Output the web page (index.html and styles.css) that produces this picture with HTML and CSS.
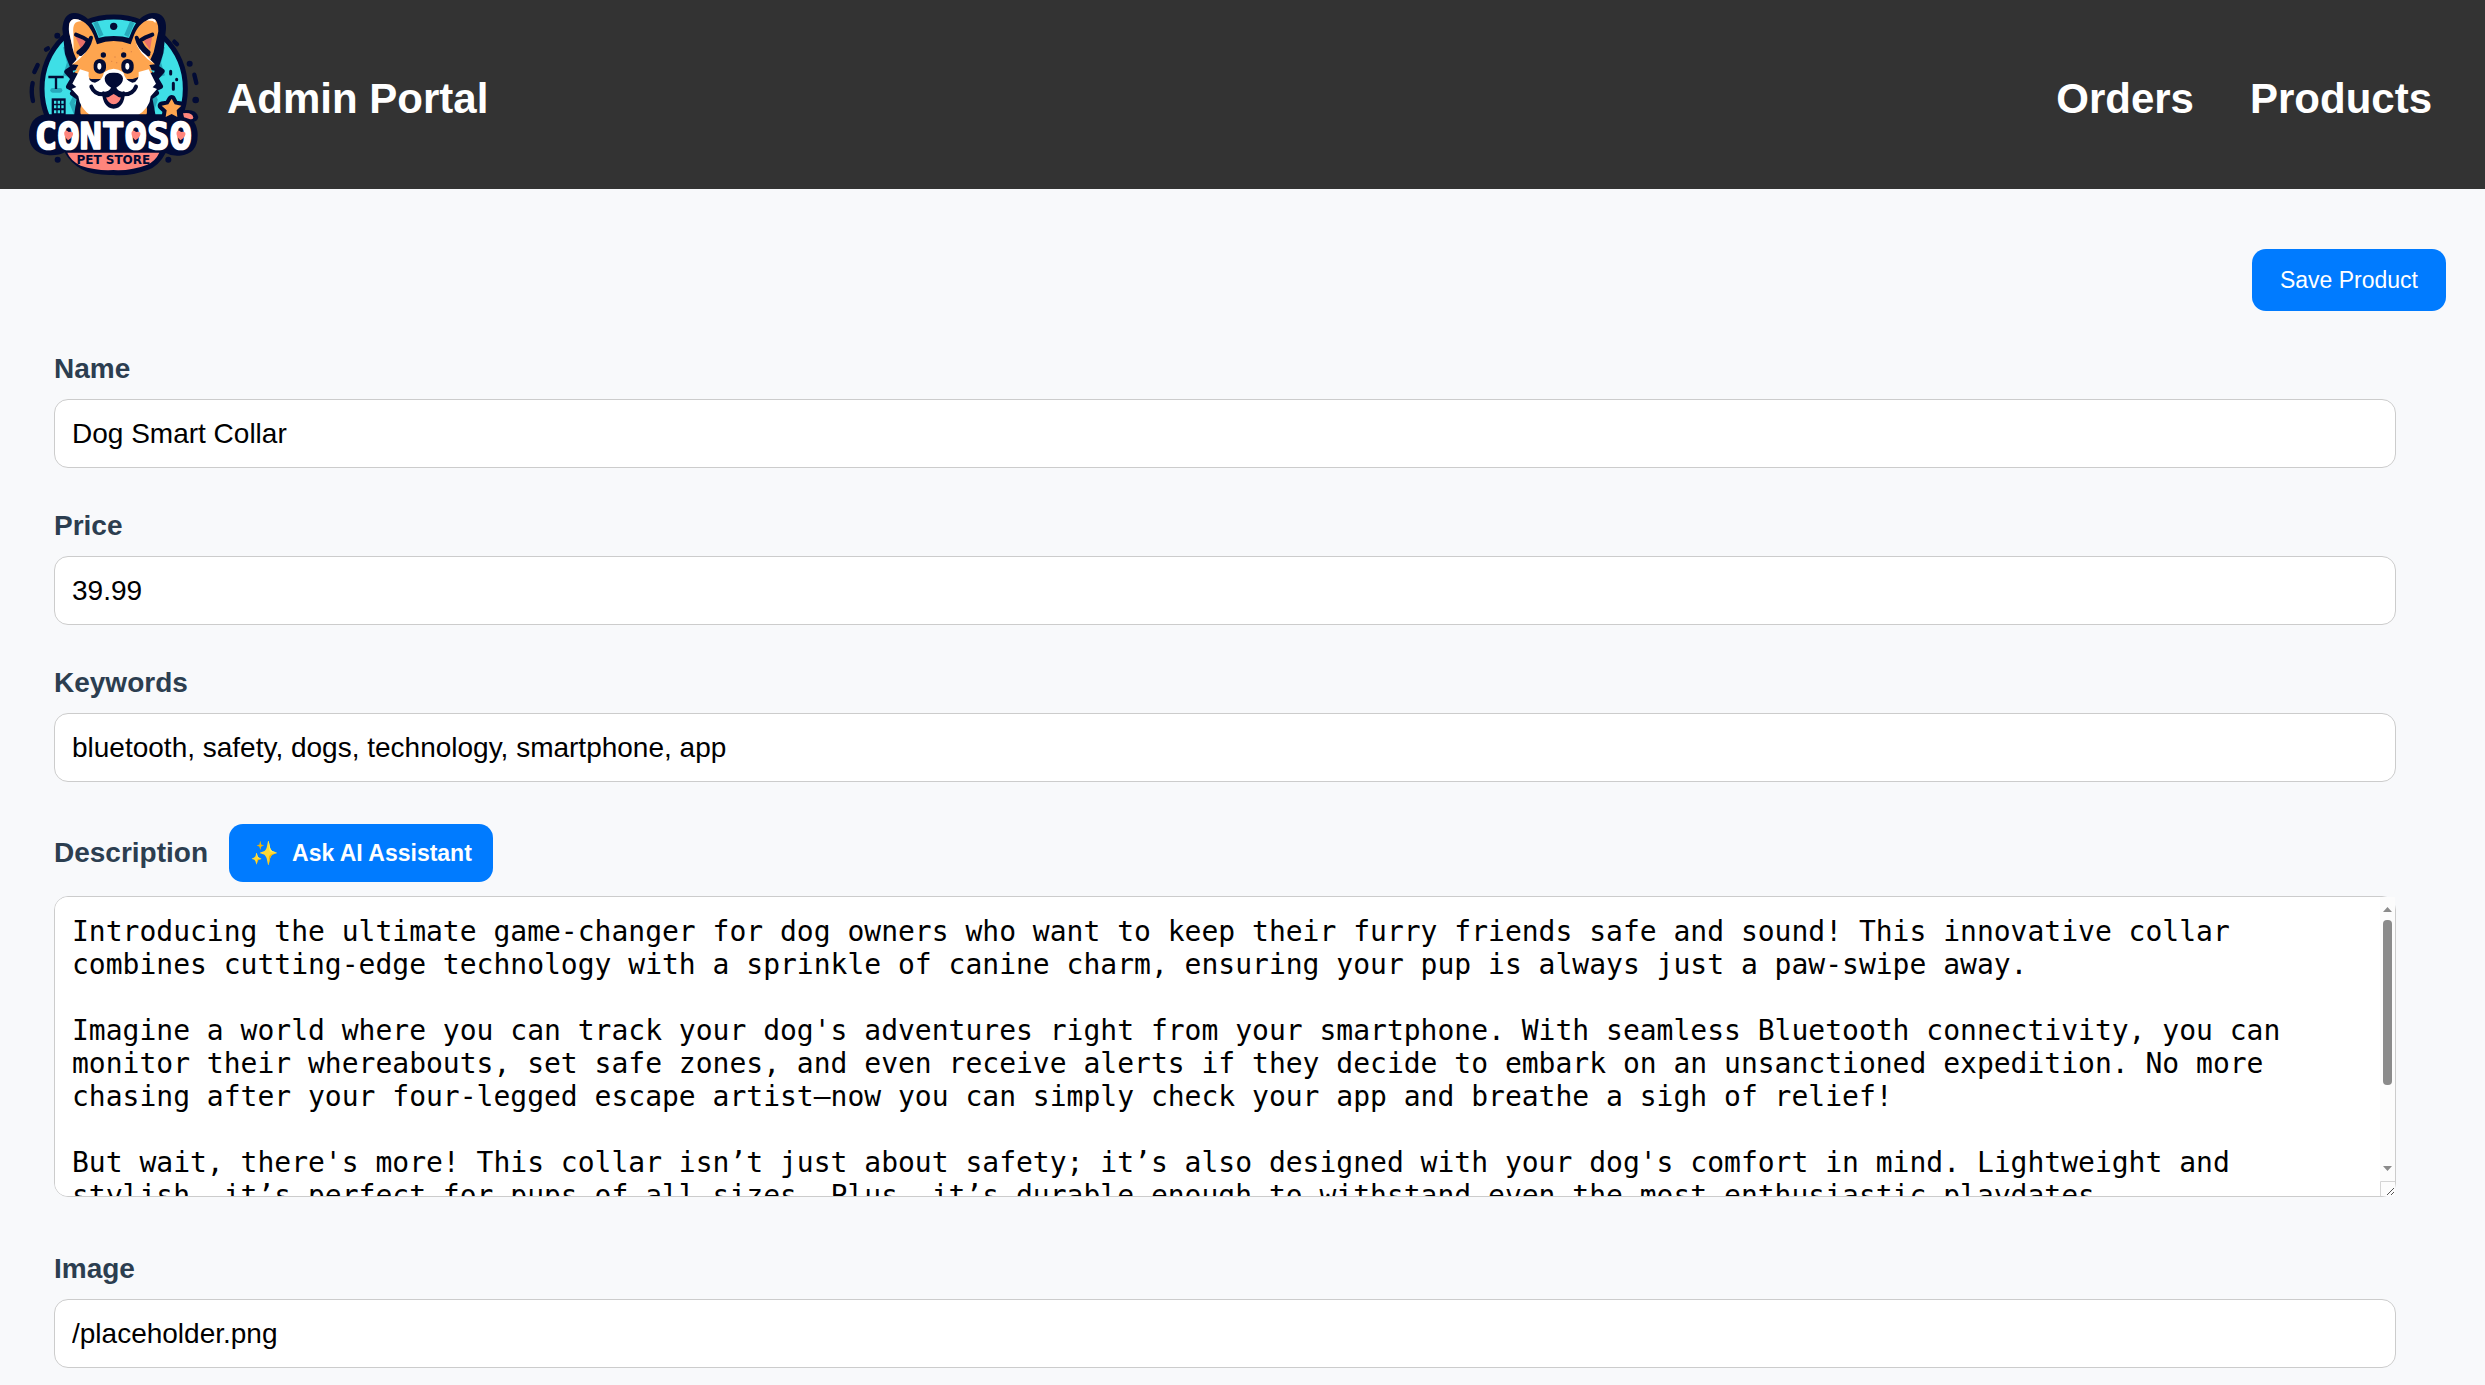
FILE: index.html
```html
<!DOCTYPE html>
<html lang="en">
<head>
  <meta charset="UTF-8">
  <meta name="viewport" content="width=device-width, initial-scale=1.0">
  <title>Admin Portal</title>
  <link rel="stylesheet" href="styles.css">
</head>
<body>
  <header>
    <a class="brand" href="#">
      <svg class="logo" viewBox="75 27 531 540" role="img" aria-label="Contoso Pet Store">
        <!-- badge -->
        <circle cx="341" cy="266" r="215" fill="#3edfe6" stroke="#020b35" stroke-width="15"/>
        <g fill="none" stroke="#27a9bb" stroke-width="14">
          <path d="M286 66l18 42M397 66l-18 42M196 140l12 48-12 40M488 140l-12 48 12 40"/>
          <path d="M228 340l-12-30 20-40M452 340l14-40-14-30"/>
        </g>
        <circle cx="341" cy="79" r="11" fill="#020b35"/>
        <!-- dots and dashes round the badge -->
        <g fill="none" stroke="#020b35" stroke-width="13" stroke-linecap="round">
          <path d="M113 195l-10 21M98 249q-6 26 1 54M144 145l-6 4M523 125l8 8M583 224l6 25"/>
        </g>
        <g fill="#020b35">
          <circle cx="172" cy="107" r="9"/>
          <circle cx="569" cy="191" r="9"/>
          <circle cx="587" cy="300" r="10"/>
          <circle cx="173" cy="479" r="9"/>
          <circle cx="505" cy="479" r="9"/>
        </g>
        <!-- skyline -->
        <rect x="151" y="264" width="36" height="14" rx="7" fill="#27a9bb"/>
        <path d="M145 231h46M168 231v36" fill="none" stroke="#020b35" stroke-width="7"/>
        <path d="M155 345v-50h42v50" fill="#020b35"/>
        <path d="M162 302h7v9h-7zM173 302h7v9h-7zM184 302h7v9h-7zM162 316h7v9h-7zM173 316h7v9h-7zM184 316h7v9h-7zM162 331h7v9h-7zM173 331h7v9h-7zM184 331h7v9h-7z" fill="#3edfe6"/>
        <path d="M512 214v8M530 238v1M520 250v18" stroke="#020b35" stroke-width="9" stroke-linecap="round"/>
        <!-- body and head -->
        <path d="M230 350l8-56-20-14 8-10-20-10 14-24-19-21 18-12-16-42-8-75q4-42 30-39 36 4 55 49l11 27q50-14 101 0l11-27q19-45 55-49 34-2 32 39l-8 72-14 44 18 12-19 21 14 24-20 10 8 10-20 14 10 56z" fill="#020b35" stroke="#020b35" stroke-width="16" stroke-linejoin="round"/>
        <path d="M244 348q-8-20 4-44l30 4h126l30-4q12 24 4 44z" fill="#fea54f"/>
        <path d="M221 158l-14-63q-4-35 16-38 38 2 58 48l10 28q50-20 101 0l10-28q18-44 56-49 18 2 17 38l-14 63-10 22 14 14-17 2 10 22-60 20H273l-50-20 12-22-19-2 14-14z" fill="#fea54f"/>
        <path d="M221 157l-14-62q-3-37 17-38 12 0 22 7-30-3-26 34zM276 119q-11 41-60 76 22-25 28-38 20-12 32-38zM405 119q9 41 58 73-24-22-28-35-22-12-30-38zM438 62q14-9 24-5 8 3 4 12-6-9-28-7z" fill="#fff"/>
        <path d="M225 107l19 42 20-25q-15-7-39-17zM457 107l-7 42-18-25q5-9 25-17z" fill="#e8706a"/>
        <path d="M228 104l22 9 14 9q-7 21-29 35M273 113q-8 33-31 49M457 104l-22 9-15 9q6 21 26 35M410 113q7 31 35 50" fill="none" stroke="#020b35" stroke-width="12" stroke-linecap="round"/>
        <!-- muzzle -->
        <path d="M240 208l26 8q-4 30 19 32 23-7 27-31 29-22 58 0 5 25 27 31 22-3 19-32l30-8 22 43-10 11 13 5-19 22q-2 36-41 58H273q-34-22-38-58l-20-22 14-6-12-10z" fill="#fff"/>
        <path d="M218 212l14-2-12 8zM464 212l-14-2 12 8z" fill="#3edfe6"/>
        <g fill="#020b35">
          <circle cx="310" cy="165" r="8"/>
          <circle cx="371" cy="165" r="8"/>
          <rect x="281" y="177" width="37" height="44" rx="18"/>
          <rect x="364" y="177" width="37" height="44" rx="18"/>
          <path d="M314 235q2-18 27-17 26-1 28 17 0 14-14 24-14 12-28 0-13-10-13-24z"/>
        </g>
        <ellipse cx="298" cy="199" rx="6" ry="10" fill="#fff"/>
        <ellipse cx="382" cy="199" rx="6" ry="10" fill="#fff"/>
        <g fill="#dc8348">
          <circle cx="345" cy="171" r="2"/>
          <circle cx="335" cy="184" r="2"/>
          <circle cx="350" cy="188" r="2"/>
          <circle cx="367" cy="146" r="2"/>
          <circle cx="394" cy="155" r="2"/>
        </g>
        <path d="M310 278q15 6 31-10 16 16 30 10-2 42-30 44-28-2-31-44z" fill="#020b35" stroke="#020b35" stroke-width="8" stroke-linejoin="round"/>
        <path d="M318 292q8 1 14-5l9-5 9 5q6 6 13 5-5 20-22 21-16-1-23-21z" fill="#ff857c"/>
        <path d="M274 260q9 23 36 23 24-2 31-23 7 21 31 23 27 0 36-23" fill="none" stroke="#020b35" stroke-width="12" stroke-linecap="round"/>
        <!-- name plate -->
        <path d="M136 343h410l3-12q40-6 46 20-2 12-13 14 11 18 11 40 0 58-54 62-24 2-42-8-21 40-54 51-51 19-103 15-60 2-95-17-34-19-51-51-15 10-46 9-61-7-61-61 1-55 49-62z" fill="#020b35"/>
        <path d="M202 458h276q-11 24-36 36-49 19-102 16-50 3-98-13-31-16-40-39z" fill="#ff857c"/>
        <path d="M549 340q28-4 31 13-2 7-12 4l-16-5z" fill="#ff857c"/>
        <path d="M515 298l8 16 20 3-14 14 2 19-16-9-17 9 3-19-15-14 20-3z" fill="#020b35" stroke="#020b35" stroke-width="26" stroke-linejoin="round"/>
        <path d="M515 296l9 17 20 4-14 14 2 20-17-9-18 9 3-20-15-14 20-4z" fill="#fea54f"/>
        <text class="logo-name" x="340" y="446" text-anchor="middle">CONTOSO</text>
        <g fill="#ff857c">
          <path id="heart" d="M204 421q-14-13-11-25 6-9 13 0 7-3 13 2 3 11-15 23z"/>
          <use href="#heart" x="202"/>
          <use href="#heart" x="337"/>
        </g>
        <text class="logo-tag" x="340" y="492" text-anchor="middle">PET STORE</text>
      </svg>
      <span>Admin Portal</span>
    </a>
    <nav>
      <a href="#orders">Orders</a>
      <a href="#products">Products</a>
    </nav>
  </header>

  <main>
    <form>
      <div class="action-button">
        <button type="button" class="button">Save Product</button>
      </div>
      <div class="form-row">
        <label for="name">Name</label>
        <input type="text" id="name" value="Dog Smart Collar">
      </div>
      <div class="form-row">
        <label for="price">Price</label>
        <input type="text" id="price" value="39.99">
      </div>
      <div class="form-row">
        <label for="keywords">Keywords</label>
        <input type="text" id="keywords" value="bluetooth, safety, dogs, technology, smartphone, app">
      </div>
      <div class="form-row description">
        <div class="label-row">
          <label for="description">Description</label>
          <button type="button" class="button ai-button"><span>✨</span> Ask AI Assistant</button>
        </div>
        <div class="textarea-wrap">
          <textarea id="description">Introducing the ultimate game-changer for dog owners who want to keep their furry friends safe and sound! This innovative collar combines cutting-edge technology with a sprinkle of canine charm, ensuring your pup is always just a paw-swipe away.

Imagine a world where you can track your dog's adventures right from your smartphone. With seamless Bluetooth connectivity, you can monitor their whereabouts, set safe zones, and even receive alerts if they decide to embark on an unsanctioned expedition. No more chasing after your four-legged escape artist—now you can simply check your app and breathe a sigh of relief!

But wait, there's more! This collar isn’t just about safety; it’s also designed with your dog's comfort in mind. Lightweight and stylish, it’s perfect for pups of all sizes. Plus, it’s durable enough to withstand even the most enthusiastic playdates.

Give your dog the freedom to explore and yourself the peace of mind you deserve. With the Dog Smart Collar, every walk is a safe one and every adventure ends back at home.</textarea>
          <svg class="scrollbar" viewBox="0 0 15 299" aria-hidden="true">
            <path d="M0 0h15v299H0z" fill="#fcfcfc"/>
            <path d="M3 15l4.500-5 4.500 5zM3 269l4.500 5 4.500-5z" fill="#8b8b8b"/>
            <rect x="3" y="23" width="9" height="165" rx="4" fill="#8b8b8b"/>
            <path d="M.5 299v-14.500H15" fill="none" stroke="#d4d4d4"/>
            <path d="M7 298l7-7M11 298l3-3" stroke="#555"/>
          </svg>
        </div>
      </div>
      <div class="form-row">
        <label for="image">Image</label>
        <input type="text" id="image" value="/placeholder.png">
      </div>
    </form>
  </main>
</body>
</html>
```
FILE: styles.css
```css
* {
  box-sizing: border-box;
}

body {
  margin: 0;
  background: #f8f9fb;
  color: #2c3e50;
  font-family: "Liberation Sans", Arial, sans-serif;
  font-size: 28px;
  line-height: 32px;
}

/* Header */

header {
  display: flex;
  align-items: center;
  justify-content: space-between;
  padding: 9px 53px 0 25px;
  background: #333;
  font-size: 42px;
  font-weight: bold;
  line-height: 48px;
}

header a {
  color: #fff;
  text-decoration: none;
}

.brand {
  display: flex;
  align-items: center;
  gap: 25px;
}

.logo {
  width: 177px;
  height: 180px;
}

.logo-name {
  fill: #fff;
  stroke: #fff;
  stroke-width: 5px;
  stroke-linejoin: round;
  font-family: "DejaVu Sans Mono", monospace;
  font-size: 112px;
}

.logo-tag {
  fill: #020b35;
  font-family: "DejaVu Sans", sans-serif;
  font-size: 36px;
}

nav {
  display: flex;
  gap: 56px;
}

/* Product form */

.action-button {
  display: flex;
  justify-content: flex-end;
  padding: 60px 39px 42px;
}

.form-row {
  display: flex;
  flex-direction: column;
  gap: 14px;
  margin: 0 89px 42px 54px;
}

.form-row:last-child {
  margin-bottom: 16px;
}

.description {
  margin-bottom: 56px;
}

.label-row {
  display: flex;
  align-items: center;
  gap: 21px;
}

label {
  font-weight: bold;
}

input,
textarea {
  width: 100%;
  padding: 18px 17px;
  border: 1px solid #ccc;
  border-radius: 14px;
  background: #fff;
  color: #000;
  font-family: inherit;
  font-size: 28px;
}

input {
  height: 69px;
}

.textarea-wrap {
  position: relative;
}

textarea {
  display: block;
  height: 301px;
  padding-right: 32px;
  font-family: "DejaVu Sans Mono", monospace;
  line-height: 33px;
  resize: none;
  scrollbar-width: none;
}

.scrollbar {
  position: absolute;
  top: 1px;
  right: 1px;
  width: 15px;
  height: 299px;
  pointer-events: none;
}

.button {
  height: 62px;
  padding: 0 28px;
  border: 0;
  border-radius: 14px;
  background: #007bff;
  color: #fff;
  font-family: inherit;
  font-size: 23px;
  cursor: pointer;
}

.ai-button {
  display: flex;
  align-items: center;
  gap: 13px;
  height: 58px;
  padding: 0 21px;
  font-weight: bold;
}
```
